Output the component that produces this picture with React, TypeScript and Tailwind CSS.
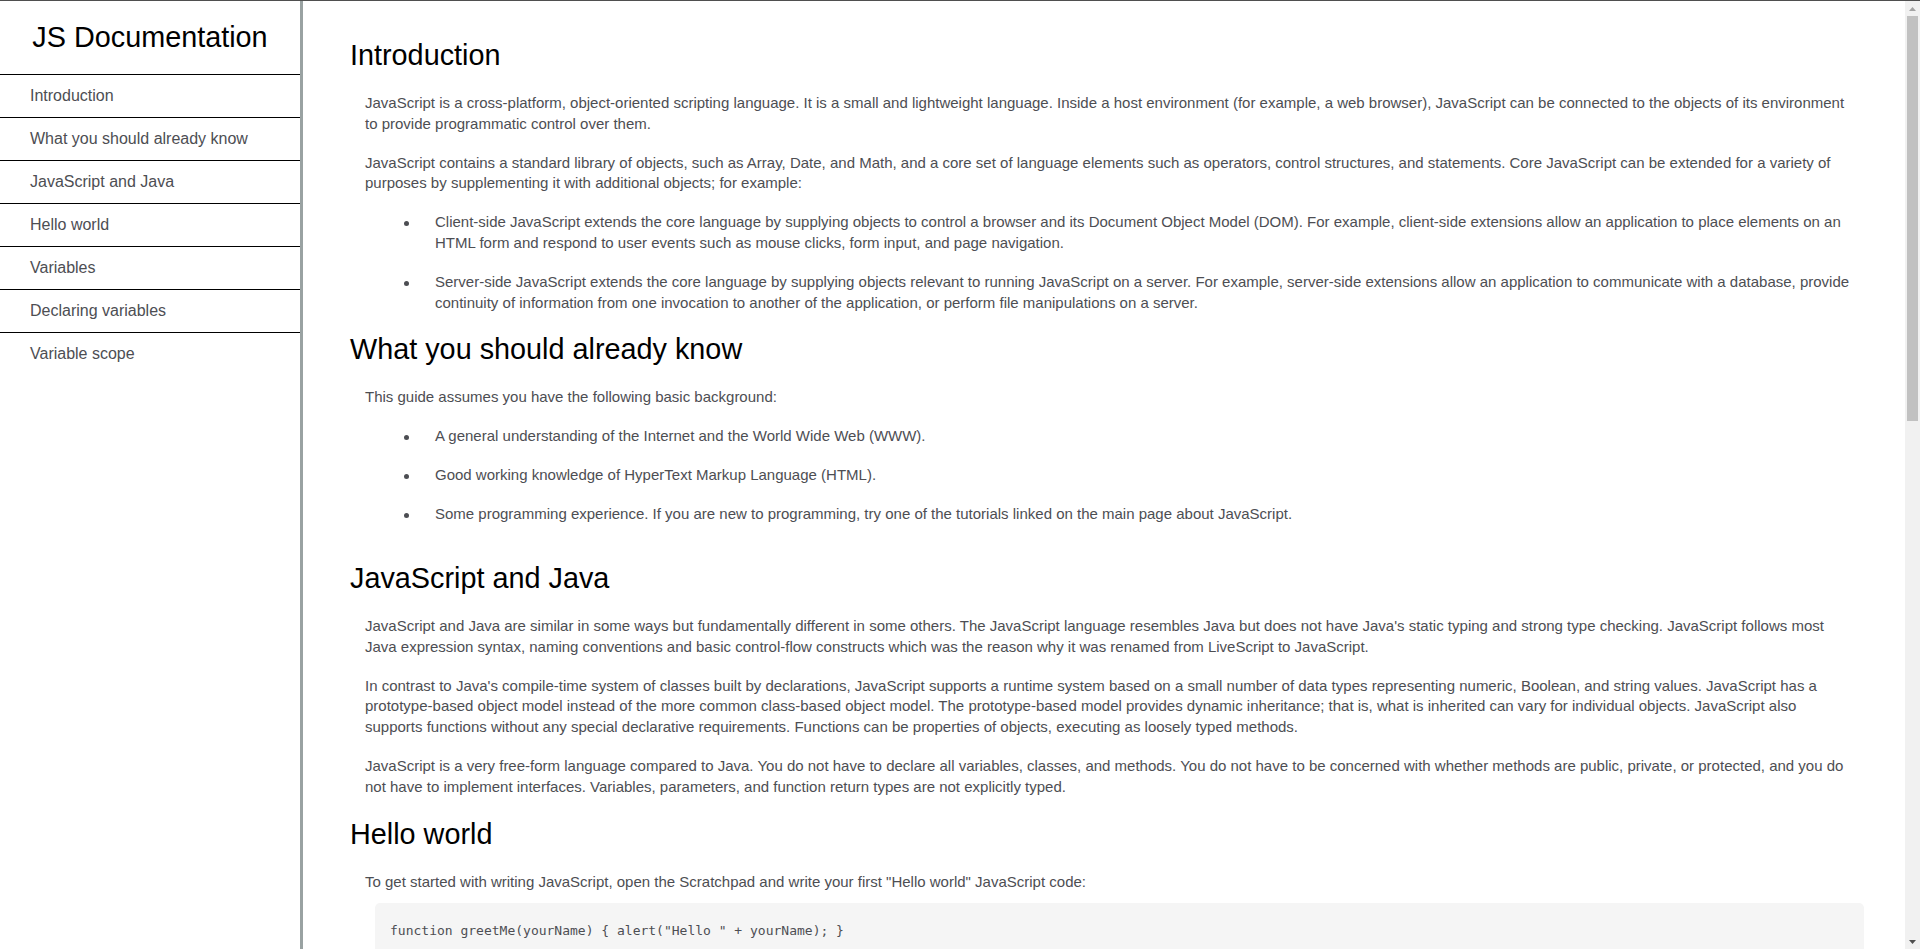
import React from 'react';

type Block =
  | { kind: 'p'; text: string }
  | { kind: 'ul'; items: string[] }
  | { kind: 'code'; text: string };

interface Section {
  id: string;
  title: string;
  blocks: Block[];
}

const sections: Section[] = [
  {
    id: 'Introduction',
    title: 'Introduction',
    blocks: [
      {
        kind: 'p',
        text: 'JavaScript is a cross-platform, object-oriented scripting language. It is a small and lightweight language. Inside a host environment (for example, a web browser), JavaScript can be connected to the objects of its environment to provide programmatic control over them.',
      },
      {
        kind: 'p',
        text: 'JavaScript contains a standard library of objects, such as Array, Date, and Math, and a core set of language elements such as operators, control structures, and statements. Core JavaScript can be extended for a variety of purposes by supplementing it with additional objects; for example:',
      },
      {
        kind: 'ul',
        items: [
          'Client-side JavaScript extends the core language by supplying objects to control a browser and its Document Object Model (DOM). For example, client-side extensions allow an application to place elements on an HTML form and respond to user events such as mouse clicks, form input, and page navigation.',
          'Server-side JavaScript extends the core language by supplying objects relevant to running JavaScript on a server. For example, server-side extensions allow an application to communicate with a database, provide continuity of information from one invocation to another of the application, or perform file manipulations on a server.',
        ],
      },
    ],
  },
  {
    id: 'What_you_should_already_know',
    title: 'What you should already know',
    blocks: [
      { kind: 'p', text: 'This guide assumes you have the following basic background:' },
      {
        kind: 'ul',
        items: [
          'A general understanding of the Internet and the World Wide Web (WWW).',
          'Good working knowledge of HyperText Markup Language (HTML).',
          'Some programming experience. If you are new to programming, try one of the tutorials linked on the main page about JavaScript.',
        ],
      },
    ],
  },
  {
    id: 'JavaScript_and_Java',
    title: 'JavaScript and Java',
    blocks: [
      {
        kind: 'p',
        text: "JavaScript and Java are similar in some ways but fundamentally different in some others. The JavaScript language resembles Java but does not have Java's static typing and strong type checking. JavaScript follows most Java expression syntax, naming conventions and basic control-flow constructs which was the reason why it was renamed from LiveScript to JavaScript.",
      },
      {
        kind: 'p',
        text: "In contrast to Java's compile-time system of classes built by declarations, JavaScript supports a runtime system based on a small number of data types representing numeric, Boolean, and string values. JavaScript has a prototype-based object model instead of the more common class-based object model. The prototype-based model provides dynamic inheritance; that is, what is inherited can vary for individual objects. JavaScript also supports functions without any special declarative requirements. Functions can be properties of objects, executing as loosely typed methods.",
      },
      {
        kind: 'p',
        text: 'JavaScript is a very free-form language compared to Java. You do not have to declare all variables, classes, and methods. You do not have to be concerned with whether methods are public, private, or protected, and you do not have to implement interfaces. Variables, parameters, and function return types are not explicitly typed.',
      },
    ],
  },
  {
    id: 'Hello_world',
    title: 'Hello world',
    blocks: [
      {
        kind: 'p',
        text: 'To get started with writing JavaScript, open the Scratchpad and write your first "Hello world" JavaScript code:',
      },
      { kind: 'code', text: 'function greetMe(yourName) { alert("Hello " + yourName); }' },
      { kind: 'p', text: 'greetMe("World");' },
      {
        kind: 'p',
        text: 'Select the code in the pad and hit Ctrl+R to watch it unfold in your browser!',
      },
    ],
  },
  {
    id: 'Variables',
    title: 'Variables',
    blocks: [
      {
        kind: 'p',
        text: 'You use variables as symbolic names for values in your application. The names of variables, called identifiers, conform to certain rules.',
      },
    ],
  },
  {
    id: 'Declaring_variables',
    title: 'Declaring variables',
    blocks: [{ kind: 'p', text: 'You can declare a variable in three ways:' }],
  },
  {
    id: 'Variable_scope',
    title: 'Variable scope',
    blocks: [
      {
        kind: 'p',
        text: 'When you declare a variable outside of any function, it is called a global variable, because it is available to any other code in the current document.',
      },
    ],
  },
];

const renderBlock = (block: Block, i: number) => {
  if (block.kind === 'p') {
    return (
      <p key={i} className="mt-[18px] first:mt-0">
        {block.text}
      </p>
    );
  }
  if (block.kind === 'ul') {
    return (
      <ul key={i} className="mt-[18px] flex flex-col gap-[18px] first:mt-0">
        {block.items.map((item) => (
          <li key={item} className="flex">
            <span className="flex w-[70px] shrink-0 justify-end pr-[26px] pt-[9px]">
              <span className="size-[5px] rounded-full bg-[#4d4e53]"></span>
            </span>
            <span>{item}</span>
          </li>
        ))}
      </ul>
    );
  }
  return (
    <code
      key={i}
      className="-mr-[10px] mb-[10px] ml-[10px] mt-[10.5px] block rounded-[5px] bg-[#f5f5f5] p-[15px] font-['DejaVu_Sans_Mono',monospace] text-[13px] leading-[26px] text-[#4d4e53]"
    >
      {block.text}
    </code>
  );
};

// classic browser scrollbar seen at the right edge of the screenshot
const Scrollbar = () => (
  <div className="flex w-[15px] shrink-0 flex-col bg-[#f1f1f1]">
    <div className="flex h-[15px] items-center justify-center">
      <svg width="7" height="4" viewBox="0 0 7 4">
        <path d="M3.5 0L7 4H0z" fill="#a3a3a3" />
      </svg>
    </div>
    <div className="mx-[2px] h-[405px] bg-[#c1c1c1]"></div>
    <div className="flex-1"></div>
    <div className="flex h-[15px] items-center justify-center">
      <svg width="7" height="4" viewBox="0 0 7 4">
        <path d="M0 0H7L3.5 4z" fill="#505050" />
      </svg>
    </div>
  </div>
);

export default function App() {
  return (
    <div className="flex h-screen overflow-hidden border-t border-[#4f4f4f] bg-white font-['Liberation_Sans',Arial,sans-serif] text-[#4d4e53]">
      {/* Sidebar navigation */}
      <nav className="w-[303px] shrink-0 border-r-[3px] border-[#99a2a2]">
        <header className="flex h-[73px] items-center justify-center text-[28.8px] leading-[33px] text-black">
          JS Documentation
        </header>
        <ul>
          {sections.map((s) => (
            <li key={s.id} className="border-t border-black">
              <a
                href={`#${s.id}`}
                className="block px-[30px] py-[12px] text-[16px] leading-[18px] text-[#4d4e53] no-underline"
              >
                {s.title}
              </a>
            </li>
          ))}
        </ul>
      </nav>

      {/* Main documentation */}
      <main className="min-w-0 flex-1 overflow-hidden pb-[110px] pl-[47px] pr-[51px] pt-[38px]">
        {sections.map((s, idx) => (
          <section
            key={s.id}
            id={s.id}
            className={idx === 0 ? '' : idx === 2 ? 'mt-[37.5px]' : 'mt-[20px]'}
          >
            <header className="text-[28.8px] leading-[33px] text-black">{s.title}</header>
            <article className="ml-[15px] mt-[21px] text-[15px] leading-[20.8px]">
              {s.blocks.map(renderBlock)}
            </article>
          </section>
        ))}
      </main>

      <Scrollbar />
    </div>
  );
}
